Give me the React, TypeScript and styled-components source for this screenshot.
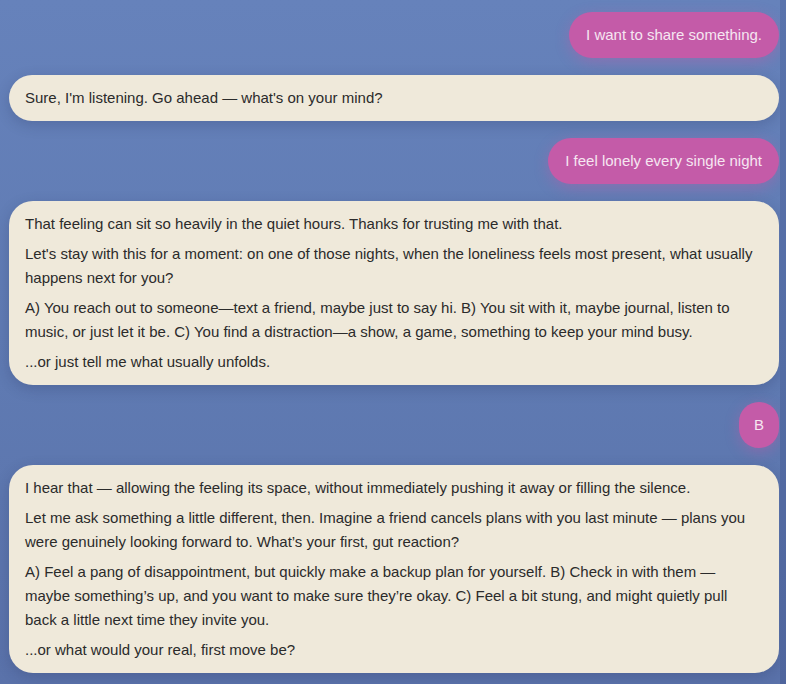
import React from "react";
import styled, { createGlobalStyle } from "styled-components";

const GlobalStyle = createGlobalStyle`
  html, body {
    margin: 0;
    padding: 0;
    height: 100%;
  }
  body {
    font-family: "Liberation Sans", Arial, sans-serif;
    background: #6079b1;
  }
  #root {
    height: 100%;
  }
`;

// chat pane; the darker right border stands in for the scrollbar track
const ChatWindow = styled.div`
  height: 100vh;
  box-sizing: border-box;
  overflow: hidden;
  background: linear-gradient(180deg, #6682bb 0%, #5f7ab2 55%, #5a72aa 100%);
  border-right: 6px solid rgba(25, 40, 95, 0.16);
  padding: 12px 1px 20px 9px;
  display: flex;
  flex-direction: column;
  gap: 17px;
`;

const Row = styled.div<{ $fromUser?: boolean }>`
  display: flex;
  justify-content: ${(p) => (p.$fromUser ? "flex-end" : "stretch")};
`;

const UserBubble = styled.div<{ $short?: boolean }>`
  background: #c45ba8;
  color: #f6e6f1;
  font-size: 15px;
  line-height: 24px;
  padding: 11px ${(p) => (p.$short ? "15px" : "17px")};
  border-radius: 999px;
  box-shadow: 0 4px 14px rgba(196, 91, 168, 0.4);
  white-space: nowrap;
`;

const AssistantBubble = styled.div`
  flex: 1;
  background: #efe9da;
  color: #2b2b2b;
  font-size: 15px;
  line-height: 24px;
  padding: 11px 16px;
  border-radius: 24px;
  box-shadow: 0 4px 14px rgba(30, 40, 80, 0.22);
  display: flex;
  flex-direction: column;
  gap: 6px;
`;

const Para = styled.p`
  margin: 0;
`;

const Line = styled.span`
  display: block;
  white-space: nowrap;
`;

type Message =
  | { from: "user"; text: string }
  | { from: "bot"; paras: string[][] };

const messages: Message[] = [
  { from: "user", text: "I want to share something." },
  { from: "bot", paras: [["Sure, I'm listening. Go ahead — what's on your mind?"]] },
  { from: "user", text: "I feel lonely every single night" },
  {
    from: "bot",
    paras: [
      ["That feeling can sit so heavily in the quiet hours. Thanks for trusting me with that."],
      [
        "Let's stay with this for a moment: on one of those nights, when the loneliness feels most present, what usually",
        "happens next for you?",
      ],
      [
        "A) You reach out to someone—text a friend, maybe just to say hi. B) You sit with it, maybe journal, listen to",
        "music, or just let it be. C) You find a distraction—a show, a game, something to keep your mind busy.",
      ],
      ["...or just tell me what usually unfolds."],
    ],
  },
  { from: "user", text: "B" },
  {
    from: "bot",
    paras: [
      ["I hear that — allowing the feeling its space, without immediately pushing it away or filling the silence."],
      [
        "Let me ask something a little different, then. Imagine a friend cancels plans with you last minute — plans you",
        "were genuinely looking forward to. What’s your first, gut reaction?",
      ],
      [
        "A) Feel a pang of disappointment, but quickly make a backup plan for yourself. B) Check in with them —",
        "maybe something’s up, and you want to make sure they’re okay. C) Feel a bit stung, and might quietly pull",
        "back a little next time they invite you.",
      ],
      ["...or what would your real, first move be?"],
    ],
  },
];

export default function App() {
  return (
    <>
      <GlobalStyle />
      <ChatWindow>
        {messages.map((m, i) =>
          m.from === "user" ? (
            <Row key={i} $fromUser>
              <UserBubble $short={m.text.length < 3}>{m.text}</UserBubble>
            </Row>
          ) : (
            <Row key={i}>
              <AssistantBubble>
                {m.paras.map((p, j) => (
                  <Para key={j}>
                    {p.map((l, k) => (
                      <Line key={k}>{l}</Line>
                    ))}
                  </Para>
                ))}
              </AssistantBubble>
            </Row>
          )
        )}
      </ChatWindow>
    </>
  );
}
